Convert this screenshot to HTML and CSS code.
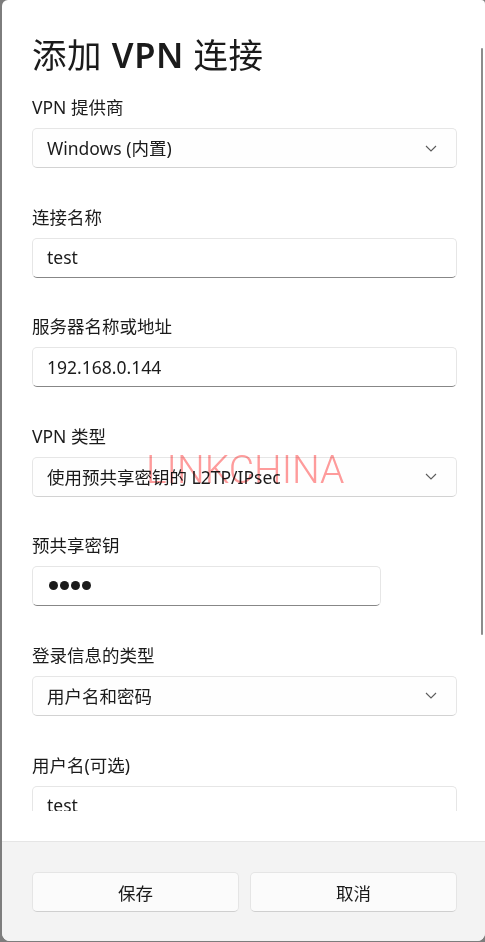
FILE: index.html
```html
<!DOCTYPE html>
<html lang="zh-CN">
<head>
<meta charset="utf-8">
<link rel="stylesheet" href="styles.css">
</head>
<body>
<div class="window">
  <div class="body">
    <div class="scroll">
      <h1 class="title">添加 <span class="strong">VPN</span> 连接</h1>

      <div class="field first">
        <div class="label">VPN 提供商</div>
        <div class="control select"><span>Windows (内置)</span><svg class="chev" viewBox="0 0 12 7" width="12" height="7"><path d="M1 1l5 5 5-5" fill="none" stroke="#5c5c5c" stroke-width="1.1"/></svg></div>
      </div>

      <div class="field">
        <div class="label">连接名称</div>
        <div class="control text"><span>test</span></div>
      </div>

      <div class="field">
        <div class="label">服务器名称或地址</div>
        <div class="control text"><span>192.168.0.144</span></div>
      </div>

      <div class="field">
        <div class="label">VPN 类型</div>
        <div class="control select"><span>使用预共享密钥的 L2TP/IPsec</span><svg class="chev" viewBox="0 0 12 7" width="12" height="7"><path d="M1 1l5 5 5-5" fill="none" stroke="#5c5c5c" stroke-width="1.1"/></svg></div>
      </div>

      <div class="field">
        <div class="label">预共享密钥</div>
        <div class="control text short"><span class="dots"><i></i><i></i><i></i><i></i></span></div>
      </div>

      <div class="field">
        <div class="label">登录信息的类型</div>
        <div class="control select"><span>用户名和密码</span><svg class="chev" viewBox="0 0 12 7" width="12" height="7"><path d="M1 1l5 5 5-5" fill="none" stroke="#5c5c5c" stroke-width="1.1"/></svg></div>
      </div>

      <div class="field">
        <div class="label">用户名(可选)</div>
        <div class="control text"><span>test</span></div>
      </div>

      <div class="field">
        <div class="label">密码(可选)</div>
        <div class="control text"><span></span></div>
      </div>
    </div>
  </div>
  <div class="footer">
    <button class="btn">保存</button>
    <button class="btn">取消</button>
  </div>
  <div class="scrollbar"></div>
  <div class="watermark">LINKCHINA</div>
</div>
</body>
</html>
```
FILE: styles.css
```css
html, body {
  margin: 0;
  padding: 0;
}
body {
  background: #7d7d7d;
  width: 485px;
  height: 942px;
  overflow: hidden;
  font-family: "Noto Sans", "Noto Sans CJK SC", sans-serif;
  color: #1b1b1b;
}
.window {
  position: relative;
  margin-left: 2px;
  width: 483px;
  height: 941px;
  background: #ffffff;
  border-radius: 6px 4px 8px 8px;
  display: flex;
  flex-direction: column;
  overflow: hidden;
}
.body {
  height: 841px;
  box-sizing: border-box;
  padding-bottom: 30px;
  flex: none;
}
.scroll {
  height: 811px;
  overflow: hidden;
  padding: 32px 28px 0 30px;
  box-sizing: border-box;
}
.title {
  margin: 0;
  font-size: 34.5px;
  line-height: 46px;
  height: 46px;
  font-weight: 400;
  letter-spacing: 0.6px;
}
.title .strong {
  font-weight: 600;
}
.field {
  margin-top: 37.6px;
}
.field.first {
  margin-top: 18px;
}
.label {
  font-size: 17.5px;
  line-height: 22px;
  height: 22px;
  margin-bottom: 10px;
}
.control {
  height: 40px;
  box-sizing: border-box;
  border: 1px solid #e6e6e6;
  border-radius: 5px;
  background: #fff;
  display: flex;
  align-items: center;
  padding: 0 19px 0 14px;
  font-size: 17.5px;
}
.control span {
  margin-top: -1px;
}
.control.select {
  border-bottom-color: #d2d2d2;
  justify-content: space-between;
  background: #fefefe;
}
.control.text {
  border-bottom: 1px solid #878787;
}
.control.short {
  width: 349px;
}
.chev {
  display: block;
  margin-top: 0;
}
.dots {
  display: flex;
  gap: 2px;
  padding-left: 2px;
}
.dots i {
  display: block;
  width: 9px;
  height: 9px;
  border-radius: 50%;
  background: #1b1b1b;
}
.footer {
  flex: 1;
  background: #f3f3f3;
  border-top: 1px solid #e5e5e5;
  padding: 30px 28px 0 30px;
  display: flex;
  gap: 11px;
  align-items: flex-start;
}
.btn {
  flex: 1;
  height: 40px;
  border: 1px solid #e5e5e5;
  border-bottom-color: #cfcfcf;
  border-radius: 5px;
  background: #fbfbfb;
  font-family: "Noto Sans", "Noto Sans CJK SC", sans-serif;
  font-size: 17.5px;
  color: #1b1b1b;
  padding: 0;
}
.scrollbar {
  position: absolute;
  left: 479px;
  top: 48px;
  width: 2px;
  height: 587px;
  background: #8c8c8c;
  border-radius: 1px;
}
.watermark {
  position: absolute;
  left: 144px;
  top: 447px;
  font-family: Roboto, sans-serif;
  font-weight: 300;
  font-size: 39px;
  line-height: 46px;
  color: #ff9c9c;
  mix-blend-mode: multiply;
  pointer-events: none;
}
```
